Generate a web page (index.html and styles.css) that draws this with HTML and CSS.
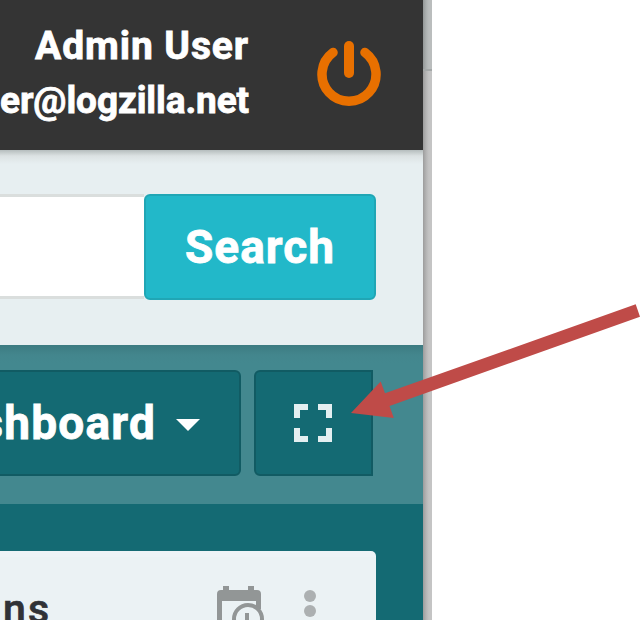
FILE: index.html
```html
<!DOCTYPE html>
<html lang="en">
<head>
<meta charset="utf-8">
<title>LogZilla</title>
<link rel="stylesheet" href="styles.css">
</head>
<body>
<div class="window">
  <header class="topbar">
    <div class="account">
      <div class="name">Admin User</div>
      <div class="email">er@logzilla.net</div>
    </div>
    <svg class="power" viewBox="0 0 66 66" fill="none" stroke="#e87000" stroke-linecap="round">
      <path d="M17 12.5A27 27 0 1 0 49 12.5" stroke-width="9.5"/>
      <path d="M33 6V33" stroke-width="10"/>
    </svg>
  </header>
  <div class="searchbar">
    <div class="field"></div>
    <button class="search">Search</button>
  </div>
  <div class="toolbar">
    <button class="dashboard"><span>shboard</span><i class="caret"></i></button>
    <button class="fullscreen">
      <svg viewBox="0 0 38 38" fill="none" stroke="#e4eff1" stroke-width="6"><path d="M3 14V3H14M24 3H35V14M35 24V35H24M14 35H3V24"/></svg>
    </button>
  </div>
  <main class="content">
    <section class="widget">
      <span class="title">ns</span>
      <svg class="calendar" viewBox="0 0 48 56">
        <path d="M4 5H6V1H12V5H31V1H37V5H40Q44 5 44 9V24H39V16H5V44H18V49H4Q0 49 0 44V9Q0 5 4 5Z" fill="#929696"/>
        <circle cx="31" cy="34" r="14" fill="#ebf2f4" stroke="#929696" stroke-width="4"/>
        <path d="M30 28V36L36 39" fill="none" stroke="#929696" stroke-width="4"/>
      </svg>
      <div class="more"><i></i><i></i><i></i></div>
    </section>
  </main>
</div>
<div class="edge"><div class="edge-top"></div></div>
<svg class="arrow" viewBox="0 0 641 620"><path d="M351 413L380.7 381.5L385 393.3L635.7 304.3L640 316.7L389.5 406L393.8 418Z" fill="#bf4b48"/></svg>
</body>
</html>
```
FILE: styles.css
```css
* { box-sizing: border-box; }
body {
  margin: 0;
  width: 641px;
  height: 620px;
  overflow: hidden;
  position: relative;
  display: flex;
  background: #fff;
  font-family: Roboto, "Liberation Sans", sans-serif;
  font-weight: 700;
}
button { font: inherit; color: #fff; padding: 0; margin: 0; }
.name, .email, .search, .dashboard { -webkit-text-stroke: 0.8px #fff; }
.window { width: 423px; height: 620px; overflow: hidden; display: flex; flex-direction: column; }
.topbar {
  height: 150px;
  flex: none;
  background: #343434;
  color: #fff;
  display: flex;
  justify-content: flex-end;
  padding-right: 41px;
}
.account { width: 249px; text-align: right; white-space: nowrap; padding-top: 19px; margin-right: 67px; }
.name { font-size: 39px; line-height: 54px; letter-spacing: 0.9px; }
.email { font-size: 37px; line-height: 55px; letter-spacing: -0.1px; }
.power { width: 66px; height: 66px; flex: none; margin-top: 40px; }
.searchbar {
  height: 195px;
  flex: none;
  background: linear-gradient(#b5bdbd, #dce2e3 6px, #e7eff1 14px);
  display: flex;
  padding: 44px 47px 45px 0;
}
.field { width: 144px; margin-bottom: 1px; background: #fff; border: solid #dadedd; border-width: 3px 0; }
.search {
  width: 232px;
  height: 106px;
  background: #22b8c9;
  border: 2px solid #20a6b5;
  border-radius: 6px;
  font-size: 46px;
  letter-spacing: 1px;
}
.toolbar {
  height: 159px;
  flex: none;
  background: linear-gradient(#3c7b81, #43868d 10px, #43888f 18px);
  display: flex;
  justify-content: flex-end;
  gap: 13px;
  padding: 25px 50px 0 0;
}
.dashboard, .fullscreen {
  height: 106px;
  flex: none;
  background: #146a73;
  border: 2px solid #115b63;
  display: flex;
  align-items: center;
}
.dashboard {
  width: 320px;
  border-radius: 6px;
  justify-content: flex-end;
  padding-right: 39px;
  font-size: 46px;
  letter-spacing: 1.2px;
}
.caret { border: solid transparent; border-width: 12px 12px 0; border-top-color: #fff; margin: 4px 0 0 20px; }
.fullscreen { width: 119px; border-radius: 6px 0 0 6px; justify-content: center; padding-right: 2px; }
.fullscreen svg { width: 38px; height: 38px; }
.content { flex: 1; background: #146a73; padding: 47px 47px 0 0; }
.widget {
  height: 120px;
  background: linear-gradient(#edf3f6 6px, #ebf2f4 6px);
  border-radius: 0 5px 0 0;
  display: flex;
  justify-content: flex-end;
  align-items: flex-start;
}
.title { color: #303236; font-size: 41px; line-height: 46px; letter-spacing: 2px; margin: 35px 166px 0 0; font-weight: 500; -webkit-text-stroke: 0.7px #303236; }
.calendar { width: 48px; height: 56px; flex: none; margin: 34px 39px 0 0; }
.more { display: flex; flex-direction: column; gap: 3px; margin: 39px 60px 0 0; }
.more i { width: 12px; height: 12px; border-radius: 50%; background: #acb0b1; }
.edge { width: 9px; background: linear-gradient(90deg, #9c9c9c, #acacac 2px, #bababa 4px, #c4c4c4 6px); }
.edge-top { height: 71px; background: linear-gradient(90deg, #929696, #a3a7a7 2px, #b1b5b5 4px, #babdbd 6px); border-bottom: 2px solid #a4a8a8; }
.arrow { position: absolute; left: 0; top: 0; width: 641px; height: 620px; }
```
